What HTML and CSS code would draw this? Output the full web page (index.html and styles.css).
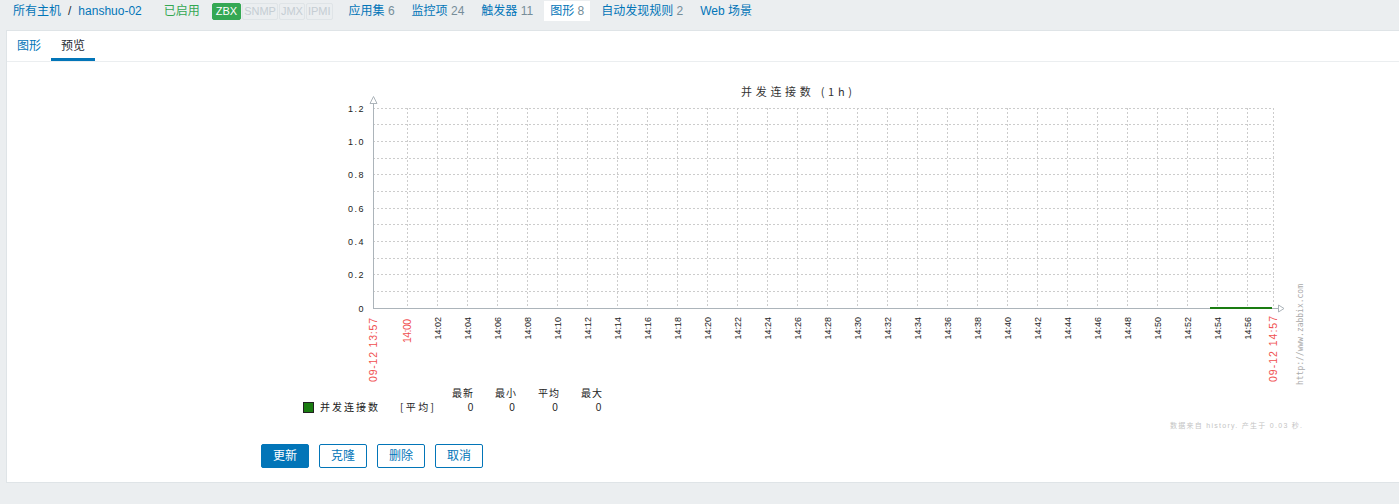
FILE: index.html
```html
<!DOCTYPE html>
<html lang="zh-CN">
<head>
<meta charset="utf-8">
<title>图形 预览</title>
<link rel="stylesheet" href="styles.css">
</head>
<body>
<nav class="crumbs">
  <a class="lnk">所有主机</a>
  <span class="sep">/</span>
  <a class="lnk">hanshuo-02</a>
  <span class="enabled">已启用</span>
  <span class="badges">
    <span class="badge on">ZBX</span>
    <span class="badge off">SNMP</span>
    <span class="badge off">JMX</span>
    <span class="badge off">IPMI</span>
  </span>
  <span class="items">
    <a class="item">应用集 <span class="cnt">6</span></a>
    <a class="item">监控项 <span class="cnt">24</span></a>
    <a class="item">触发器 <span class="cnt">11</span></a>
    <a class="item sel">图形 <span class="cnt">8</span></a>
    <a class="item">自动发现规则 <span class="cnt">2</span></a>
    <a class="item">Web 场景</a>
  </span>
</nav>

<main class="panel">
  <ul class="tabs">
    <li class="tab">图形</li>
    <li class="tab act">预览</li>
  </ul>

  <svg class="graph" width="1040" height="360" viewBox="280 75 1040 360" xmlns="http://www.w3.org/2000/svg">
    <text class="title" x="741" y="96" textLength="111" lengthAdjust="spacing">并发连接数 (1h)</text>

    <path class="grid" d="M373 108.5H1274 M373 124.5H1274 M373 141.5H1274 M373 158.5H1274 M373 174.5H1274 M373 191.5H1274 M373 208.5H1274 M373 224.5H1274 M373 241.5H1274 M373 258.5H1274 M373 274.5H1274 M373 291.5H1274
      M407.5 108V308 M437.5 108V308 M467.5 108V308 M497.5 108V308 M527.5 108V308 M557.5 108V308 M587.5 108V308 M617.5 108V308 M647.5 108V308 M677.5 108V308
      M707.5 108V308 M737.5 108V308 M767.5 108V308 M797.5 108V308 M827.5 108V308 M857.5 108V308 M887.5 108V308 M917.5 108V308 M947.5 108V308 M977.5 108V308
      M1007.5 108V308 M1037.5 108V308 M1067.5 108V308 M1097.5 108V308 M1127.5 108V308 M1157.5 108V308 M1187.5 108V308 M1217.5 108V308 M1247.5 108V308 M1273.5 108V308"/>

    <path class="axis" d="M373.5 103V308.5 M373 308.5H1279"/>
    <path class="arrow" d="M373.5 96.5 L377 103.5 L370 103.5 Z"/>
    <path class="arrow" d="M1284 308.5 L1278.5 305 L1278.5 312 Z"/>

    <path class="data" d="M1210 308H1272"/>

    <text class="yl" x="365" y="111.5">1.2</text>
    <text class="yl" x="365" y="144.8">1.0</text>
    <text class="yl" x="365" y="178.2">0.8</text>
    <text class="yl" x="365" y="211.5">0.6</text>
    <text class="yl" x="365" y="244.8">0.4</text>
    <text class="yl" x="365" y="278.2">0.2</text>
    <text class="yl" x="365" y="311.5">0</text>

    <text class="xr" transform="translate(377 318) rotate(-90)" textLength="64" lengthAdjust="spacing">09-12 13:57</text>
    <text class="xr" transform="translate(411 319) rotate(-90)" textLength="24" lengthAdjust="spacing">14:00</text>
    <text class="xl" transform="translate(441 317) rotate(-90)">14:02</text>
    <text class="xl" transform="translate(471 317) rotate(-90)">14:04</text>
    <text class="xl" transform="translate(501 317) rotate(-90)">14:06</text>
    <text class="xl" transform="translate(531 317) rotate(-90)">14:08</text>
    <text class="xl" transform="translate(561 317) rotate(-90)">14:10</text>
    <text class="xl" transform="translate(591 317) rotate(-90)">14:12</text>
    <text class="xl" transform="translate(621 317) rotate(-90)">14:14</text>
    <text class="xl" transform="translate(651 317) rotate(-90)">14:16</text>
    <text class="xl" transform="translate(681 317) rotate(-90)">14:18</text>
    <text class="xl" transform="translate(711 317) rotate(-90)">14:20</text>
    <text class="xl" transform="translate(741 317) rotate(-90)">14:22</text>
    <text class="xl" transform="translate(771 317) rotate(-90)">14:24</text>
    <text class="xl" transform="translate(801 317) rotate(-90)">14:26</text>
    <text class="xl" transform="translate(831 317) rotate(-90)">14:28</text>
    <text class="xl" transform="translate(861 317) rotate(-90)">14:30</text>
    <text class="xl" transform="translate(891 317) rotate(-90)">14:32</text>
    <text class="xl" transform="translate(921 317) rotate(-90)">14:34</text>
    <text class="xl" transform="translate(951 317) rotate(-90)">14:36</text>
    <text class="xl" transform="translate(981 317) rotate(-90)">14:38</text>
    <text class="xl" transform="translate(1011 317) rotate(-90)">14:40</text>
    <text class="xl" transform="translate(1041 317) rotate(-90)">14:42</text>
    <text class="xl" transform="translate(1071 317) rotate(-90)">14:44</text>
    <text class="xl" transform="translate(1101 317) rotate(-90)">14:46</text>
    <text class="xl" transform="translate(1131 317) rotate(-90)">14:48</text>
    <text class="xl" transform="translate(1161 317) rotate(-90)">14:50</text>
    <text class="xl" transform="translate(1191 317) rotate(-90)">14:52</text>
    <text class="xl" transform="translate(1221 317) rotate(-90)">14:54</text>
    <text class="xl" transform="translate(1251 317) rotate(-90)">14:56</text>
    <text class="xr" transform="translate(1277 316) rotate(-90)" textLength="66" lengthAdjust="spacing">09-12 14:57</text>

    <text class="url" transform="translate(1302.5 385) rotate(-90)" textLength="101" lengthAdjust="spacing">http://www.zabbix.com</text>

    <text class="lh" x="452" y="397" textLength="21">最新</text>
    <text class="lh" x="495" y="397" textLength="21">最小</text>
    <text class="lh" x="538" y="397" textLength="21">平均</text>
    <text class="lh" x="581" y="397" textLength="21">最大</text>

    <rect class="swatch" x="303.5" y="402.5" width="10" height="10"/>
    <text class="lt" x="320" y="411" textLength="58" lengthAdjust="spacing">并发连接数</text>
    <text class="lt" x="400" y="411" textLength="34" lengthAdjust="spacing">[平均]</text>
    <text class="lv" x="470.5" y="411">0</text>
    <text class="lv" x="512" y="411">0</text>
    <text class="lv" x="555" y="411">0</text>
    <text class="lv" x="598.5" y="411">0</text>

    <text class="foot" x="1170" y="428" textLength="132" lengthAdjust="spacing">数据来自 history. 产生于 0.03 秒.</text>
  </svg>

  <div class="buttons">
    <button class="btn primary">更新</button>
    <button class="btn">克隆</button>
    <button class="btn">删除</button>
    <button class="btn">取消</button>
  </div>
</main>
</body>
</html>
```
FILE: styles.css
```css
html, body {
  margin: 0;
  padding: 0;
}

body {
  background: #ebeef0;
  font-family: "Liberation Sans", Arial, "Noto Sans CJK SC", sans-serif;
  font-size: 12px;
  line-height: 14px;
  color: #1f2c33;
}

.crumbs {
  display: flex;
  align-items: center;
  height: 22px;
  padding-left: 13px;
  margin-bottom: 8px;
  white-space: nowrap;
}

.lnk {
  color: #0275b8;
}

.sep {
  margin: 0 7px;
  color: #1f2c33;
}

.enabled {
  margin-left: 22px;
  color: #34a853;
}

.badges {
  display: flex;
  gap: 1px;
  margin-left: 12px;
}

.badge {
  display: inline-block;
  height: 15px;
  line-height: 15px;
  font-size: 11px;
  border: 1px solid #dfe4e7;
  border-radius: 2px;
}

.badge.on {
  padding: 0 3px;
  background: #34a853;
  border-color: #34a853;
  color: #ffffff;
}

.badge.off {
  padding: 0 1px;
  color: #c5cdd3;
}

.items {
  display: flex;
  gap: 5px;
  margin-left: 10px;
}

.item {
  display: inline-block;
  height: 20px;
  line-height: 20px;
  padding: 0 6px;
  color: #0275b8;
}

.item.sel {
  background: #ffffff;
}

.cnt {
  color: #768d99;
}

.panel {
  display: block;
  margin-left: 6px;
  background: #ffffff;
  border: 1px solid #dfe4e7;
  border-right: none;
  padding-bottom: 14px;
}

.tabs {
  display: flex;
  margin: 0;
  padding: 0;
  list-style: none;
  height: 30px;
  border-bottom: 1px solid #ebeef0;
}

.tab {
  padding: 0 10px;
  height: 30px;
  line-height: 30px;
  color: #0275b8;
  box-sizing: border-box;
}

.tab.act {
  color: #1f2c33;
  border-bottom: 3px solid #0275b8;
}

.graph {
  display: block;
  margin: 13px 0 0 273px;
}

.graph .title {
  font-family: "Noto Sans CJK SC", sans-serif;
  font-size: 11px;
  fill: #333333;
}

.graph .grid {
  fill: none;
  stroke: #cccccc;
  stroke-width: 1;
  stroke-dasharray: 2 2;
}

.graph .axis {
  fill: none;
  stroke: #acb4ba;
  stroke-width: 1;
}

.graph .arrow {
  fill: #ffffff;
  stroke: #acb4ba;
  stroke-width: 1;
}

.graph .data {
  stroke: #1a7c11;
  stroke-width: 2;
  fill: none;
}

.graph .yl {
  font-family: "Liberation Sans", sans-serif;
  font-size: 9px;
  letter-spacing: 1.5px;
  text-anchor: end;
  fill: #222222;
}

.graph .xl {
  font-family: "Liberation Sans", sans-serif;
  font-size: 9px;
  text-anchor: end;
  fill: #222222;
}

.graph .xr {
  font-family: "Liberation Sans", sans-serif;
  font-size: 10.5px;
  text-anchor: end;
  fill: #f0504f;
}

.graph .url {
  font-family: "DejaVu Sans Mono", monospace;
  font-size: 8px;
  fill: #aaaaaa;
}

.graph .lh,
.graph .lt {
  font-family: "Noto Sans CJK SC", sans-serif;
  font-size: 10px;
  fill: #222222;
}

.graph .lv {
  font-family: "Liberation Sans", sans-serif;
  font-size: 10px;
  text-anchor: middle;
  fill: #222222;
}

.graph .swatch {
  fill: #1a7c11;
  stroke: #222222;
  stroke-width: 1;
}

.graph .foot {
  font-family: "Liberation Sans", "Noto Sans CJK SC", sans-serif;
  font-size: 7px;
  fill: #c4c4c4;
}

.buttons {
  display: flex;
  gap: 10px;
  margin: 9px 0 0 254px;
}

.btn {
  height: 24px;
  padding: 0 11px;
  border: 1px solid #0275b8;
  border-radius: 2px;
  background: #ffffff;
  color: #0275b8;
  font-family: "Liberation Sans", Arial, "Noto Sans CJK SC", sans-serif;
  font-size: 12px;
  line-height: 22px;
  box-sizing: border-box;
}

.btn.primary {
  background: #0275b8;
  color: #ffffff;
}
```
